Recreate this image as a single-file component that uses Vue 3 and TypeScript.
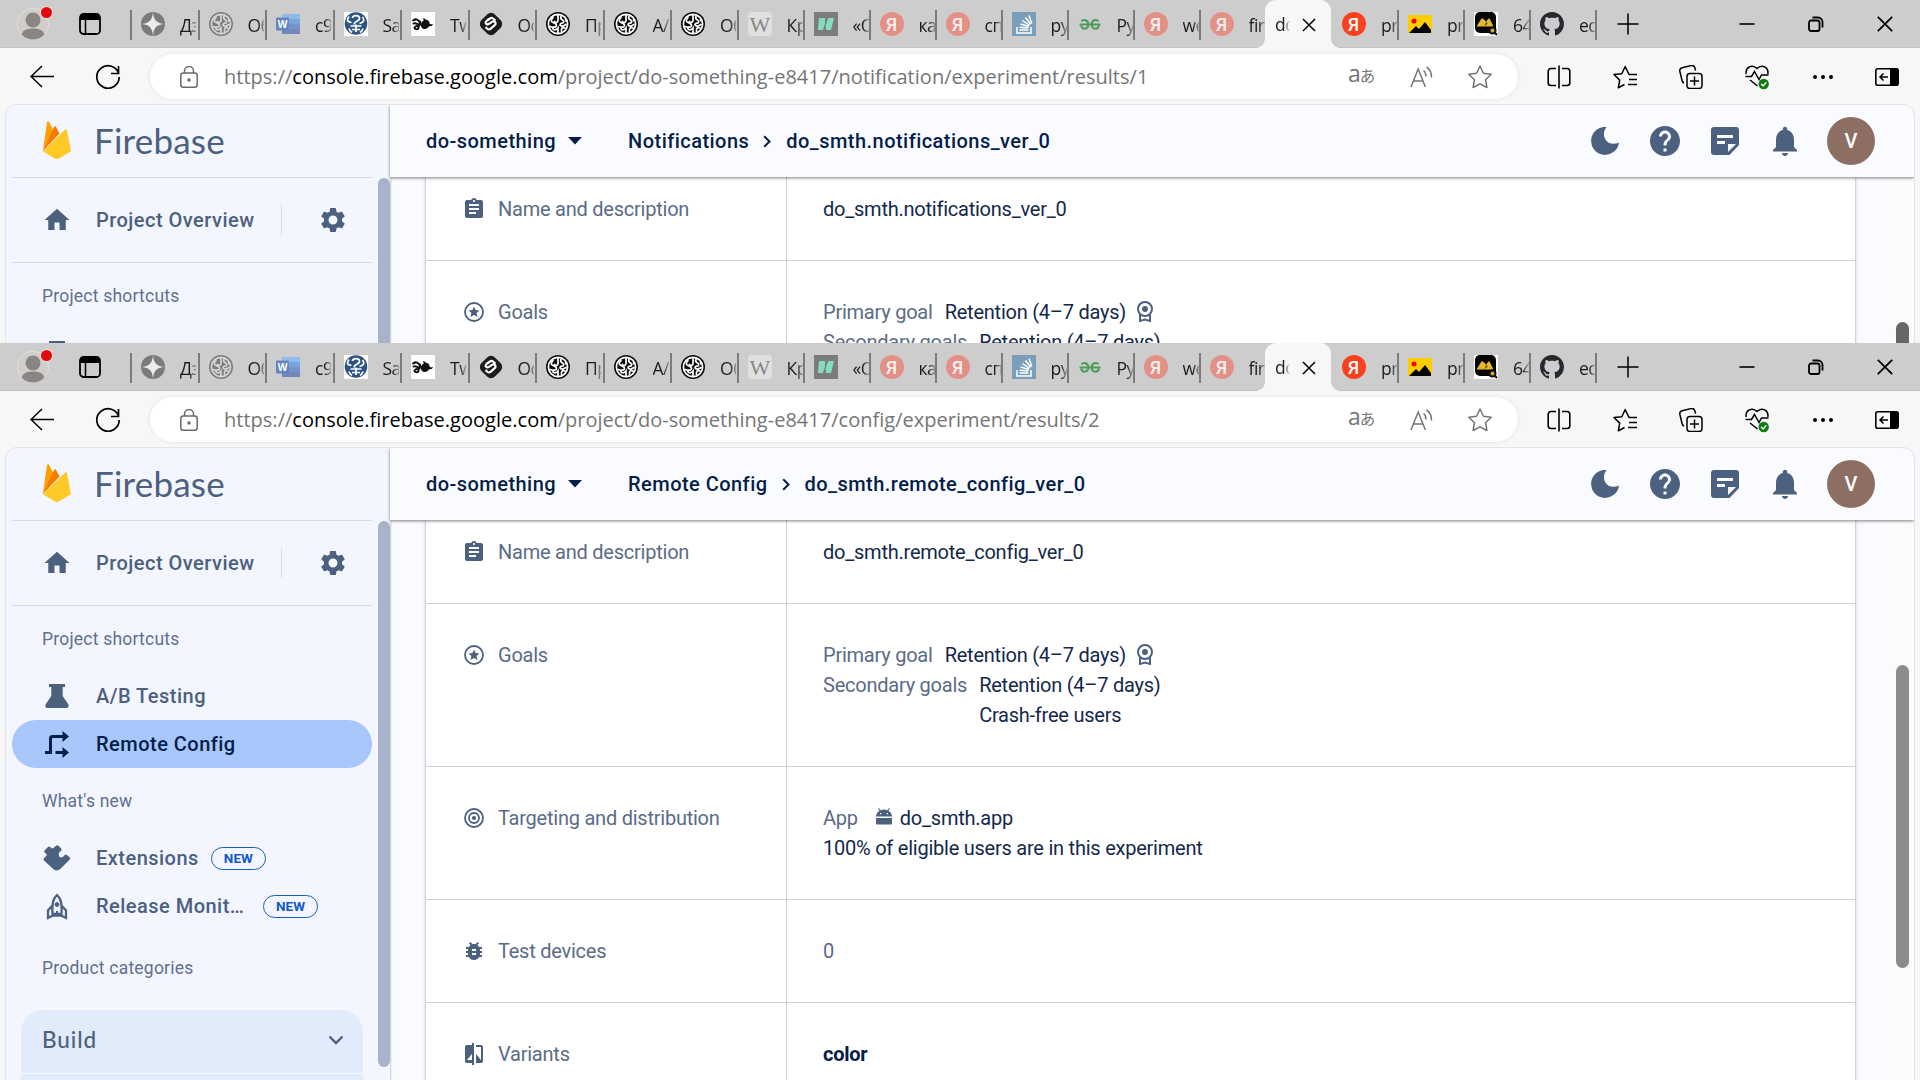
<script setup lang="ts">
interface Tab {
  icon?: string
  label: string
  width: number
  active?: boolean
  noSeparator?: boolean
}

interface BrowserWindow {
  id: string
  path: string
  section: string
  title: string
  thumbTop: number
  thumbHeight: number
  thumbColor: string
}

const tabs: Tab[] = [
  { icon: 'f-spark', label: 'Дз', width: 67.5 },
  { icon: 'f-knot-gray', label: 'Об', width: 67.5 },
  { icon: 'f-word', label: 'c9', width: 67.5 },
  { icon: 'f-sa', label: 'Sa', width: 67.5 },
  { icon: 'f-leaf', label: 'Tw', width: 67.5 },
  { icon: 'f-s', label: 'Ос', width: 67.5 },
  { icon: 'f-knot', label: 'Пр', width: 67.5 },
  { icon: 'f-knot', label: 'А/', width: 67.5 },
  { icon: 'f-knot', label: 'Об', width: 66.5 },
  { icon: 'f-wiki', label: 'Кр', width: 66 },
  { icon: 'f-quote', label: '«О', width: 66 },
  { icon: 'f-ya-dim', label: 'ка', width: 66 },
  { icon: 'f-ya-dim', label: 'сп', width: 66 },
  { icon: 'f-stack', label: 'py', width: 66 },
  { icon: 'f-geeks', label: 'Py', width: 66 },
  { icon: 'f-ya-dim', label: 'we', width: 66 },
  { icon: 'f-ya-dim', label: 'fir', width: 66 },
  { label: 'do', width: 66.5, active: true },
  { icon: 'f-ya', label: 'pr', width: 66, noSeparator: true },
  { icon: 'f-image', label: 'pr', width: 66 },
  { icon: 'f-gold', label: '64', width: 66 },
  { icon: 'f-github', label: 'ed', width: 66 },
]

const windows: BrowserWindow[] = [
  {
    id: 'first',
    path: '/project/do-something-e8417/notification/experiment/results/1',
    section: 'Notifications',
    title: 'do_smth.notifications_ver_0',
    thumbTop: 145,
    thumbHeight: 300,
    thumbColor: '#666666',
  },
  {
    id: 'second',
    path: '/project/do-something-e8417/config/experiment/results/2',
    section: 'Remote Config',
    title: 'do_smth.remote_config_ver_0',
    thumbTop: 145,
    thumbHeight: 303,
    thumbColor: '#8b8b8b',
  },
]
</script>

<template>
  <div class="screen">
    <svg class="defs" aria-hidden="true">
      <defs>
        <symbol id="knot-lines" viewBox="0 0 24 24">
          <g fill="none" stroke-width="1.7" stroke-linecap="round">
            <circle cx="12" cy="12" r="9.6" />
            <path d="M12 3v5.500c0 2-2.500 2.500-3.500 1M7 5.500C4.500 8 5 10 7 10.500c2.500.8 3.500 1 3.500 3 0 1.500-2 2-3.500 1.500M4 14.500c1.500 0 3 .5 3.500 3 1.500.5 3.500 0 4.500-1.500v5.500M15 4.500c-1 2 .5 3 1.500 3.500 2 1 1.500 3-.5 3.200-2 .3-2.500 1.300-1.500 2.300 1.500 1 3.500.5 5.500-1M19.500 7.500 20 9M19 16c-1.500-.5-3-.3-3.500 1v2.500" />
          </g>
        </symbol>
        <symbol id="f-knot" viewBox="0 0 24 24"><circle cx="12" cy="12" r="12" fill="#0c0c0c" /><use href="#knot-lines" stroke="#fff" /></symbol>
        <symbol id="f-knot-gray" viewBox="0 0 24 24"><circle cx="12" cy="12" r="12" fill="#7b7b7b" /><use href="#knot-lines" stroke="#d6d6d6" /></symbol>
        <symbol id="f-spark" viewBox="0 0 24 24"><circle cx="12" cy="12" r="12" fill="#7b7b7b" /><path d="M12 0c.6 8 3.500 11.400 12 12-8.500.6-11.400 3.500-12 12-.6-8.500-3.500-11.400-12-12 8.500-.6 11.400-4 12-12z" fill="#ececec" /></symbol>
        <symbol id="f-word" viewBox="0 0 24 24"><path d="M6 2h18v5H6z" fill="#8fbbe8" /><path d="M6 7h18v5H6z" fill="#7ba4da" /><path d="M6 12h18v5H6z" fill="#7594cc" /><path d="M6 17h18v5H6z" fill="#7387ba" /><rect y="5.500" width="13" height="13" rx="1" fill="#6585bd" /><text x="6.500" y="15.600" font-family="Open Sans, sans-serif" font-weight="700" font-size="10" text-anchor="middle" fill="#fff">W</text></symbol>
        <symbol id="f-sa" viewBox="0 0 24 24"><path d="M0 0h24v24H0z" fill="#fff" /><circle cx="12" cy="11.500" r="11.300" fill="#2c5484" /><g fill="none" stroke="#fff" stroke-width="1.700"><path d="M8.500 6c0-3 6.500-3.500 7 0 .3 3.500-5.500 3-5.500 6.500M5 4.500C2.500 8 3 10 7.500 10.500M18.500 5c2.500 3 1.500 5-3 6.500M6.500 14h11M8 17.500h8M5 16.500c.5 2 1.500 3 3 4M19 16.500c-.5 2-1.500 3-3 4M12 12.500v7.500" /></g></symbol>
        <symbol id="f-leaf" viewBox="0 0 24 24"><path d="M0 0h24v24H0z" fill="#fff" /><path d="M12.300 6.200c1.200 0 2 .7 2.600 1.500 2.300 0 4 2 3.800 4.300 1.300.2 2.300.5 3.500 0-.7 2-2.400 2.500-4.200 2.200-1.300 2.800-5.300 4-7.300 1.300-2-3-.2-6 2.500-7.500-.8-.3-1.500-1-.9-1.800z" fill="#111" /><path d="M2 8.500c3-2.200 5.500-1 7 2.300M2.500 11.500c2.500-1.500 4 1.500 6.500 1M3.500 16c1-3 4.500-2 4 0s-3.500 1.500-4-.2M9 9.500c.5 2 .3 3.500-1.500 5" fill="none" stroke="#111" stroke-width="2" stroke-linecap="round" /></symbol>
        <symbol id="f-s" viewBox="0 0 24 24"><rect x="2.500" y="2.500" width="19" height="19" rx="5.500" transform="rotate(45 12 12)" fill="#1c1c1e" /><path d="m16.500 8.500-2.500-2c-1-.8-2-.8-3 0L7.500 9c-1.500 1.200-1 3 .8 3.300 1 .2 1.700-.3 2.500-.9l2.500-1.700c1.600-1 3.700.2 3.200 2.300-.2.800-.7 1.200-1.400 1.700L11.500 16.800c-1 .7-2 .7-3 0L6.500 15.200" stroke="#fff" stroke-width="2.200" fill="none" /></symbol>
        <symbol id="f-wiki" viewBox="0 0 24 24"><rect width="24" height="24" rx="4" fill="#e0e0e0" /><text x="12" y="19.500" font-family="Liberation Serif, serif" font-size="22" text-anchor="middle" fill="#888">W</text></symbol>
        <symbol id="f-quote" viewBox="0 0 24 24"><path d="M0 0h24v24H0z" fill="#7c7c7c" /><path d="M5 6h6v7l3-7h6l-3 12h-5v-4.500L9.500 18H4z" fill="#86dcc0" /><path d="m13.500 6-4 12" stroke="#7c7c7c" stroke-width="1.200" /></symbol>
        <symbol id="f-ya-dim" viewBox="0 0 24 24"><circle cx="12" cy="12" r="12" fill="#e39186" /><text x="11.500" y="18.500" font-family="Roboto, sans-serif" font-weight="500" font-size="18" text-anchor="middle" fill="#f5f0ef">Я</text></symbol>
        <symbol id="f-ya" viewBox="0 0 24 24"><circle cx="12" cy="12" r="12" fill="#fc3f1d" /><text x="11.500" y="18.500" font-family="Roboto, sans-serif" font-weight="500" font-size="18" text-anchor="middle" fill="#fff">Я</text></symbol>
        <symbol id="f-stack" viewBox="0 0 24 24"><path d="M0 0h24v24H0z" fill="#7a9dba" /><g stroke="#fff" stroke-width="1.500" fill="none"><path d="M5 15v6h14v-6" /><path d="M7.500 18h9M7.600 15.300l8.800.8M8.500 12l8.300 2.500M10.500 8.500l7 4.800M13.500 5.500l5.200 6.800M17 3.500l2.800 8" /></g></symbol>
        <symbol id="f-geeks" viewBox="0 0 24 24"><g stroke="#4b9b5c" stroke-width="2" fill="none"><path d="M1.500 12.500h21" /><path d="M3.500 9.300C5.500 6.800 10.300 8 10.300 12.500S4.500 18.500 3 13.500M20.500 9.300C18.500 6.800 13.700 8 13.700 12.500s5.800 6 7.300 1" /></g></symbol>
        <symbol id="f-image" viewBox="0 0 24 24"><path d="M0 3h24v18H0z" fill="#fc0" /><path d="m1 21 7-7 3 3 6-7 6 8v3z" fill="#000" /><circle cx="6" cy="9" r="2.500" fill="#f00000" /></symbol>
        <symbol id="f-gold" viewBox="0 0 24 24"><path d="M0 0h24v24H0z" fill="#fff" /><rect x="1" y="0" width="21" height="21" rx="5" fill="#050505" /><path d="m2.500 14.500 5-8h1.500l3 3 2.500-3h1l4 8z" fill="#e5b92e" /><path d="m10.500 14 2-5 1 3z" fill="#6e4d08" /><circle cx="18.500" cy="18.500" r="3" stroke="#111" stroke-width="2" fill="#cda944" /><path d="m20.500 20.500 2.500 2.500" stroke="#111" stroke-width="2" /></symbol>
        <symbol id="f-github" viewBox="0 0 16 16"><path fill="#24292f" d="M8 0C3.580 0 0 3.580 0 8c0 3.540 2.290 6.530 5.470 7.590.4.070.55-.17.55-.38 0-.19-.01-.82-.01-1.490-2.010.37-2.530-.49-2.690-.94-.09-.23-.48-.94-.82-1.130-.28-.15-.68-.52-.01-.53.63-.01 1.080.58 1.230.82.72 1.210 1.870.87 2.330.66.07-.52.28-.87.51-1.070-1.780-.2-3.640-.89-3.640-3.950 0-.87.31-1.590.82-2.150-.08-.2-.36-1.020.08-2.120 0 0 .67-.21 2.200.82.64-.18 1.320-.27 2-.27s1.360.09 2 .27c1.530-1.040 2.200-.82 2.200-.82.44 1.100.16 1.920.08 2.120.51.56.82 1.270.82 2.150 0 3.070-1.870 3.750-3.650 3.950.29.25.54.73.54 1.480 0 1.070-.01 1.930-.01 2.200 0 .21.15.46.55.38A8.010 8.010 0 0 0 16 8c0-4.420-3.580-8-8-8z" /></symbol>
      </defs>
    </svg>

    <section v-for="win in windows" :key="win.id" class="window" :class="win.id">
      <div class="tabbar">
        <div class="profile">
          <svg width="32" height="32" viewBox="0 0 32 32"><circle cx="16" cy="16" r="15.700" fill="#d0cecb" stroke="#e2dfda" /><circle cx="16" cy="12" r="7.500" fill="#8a8582" /><path d="M4.500 26.500c2-5.500 7-6 11.500-6s9.500.5 11.500 6a15.500 15.500 0 0 1-23 0z" fill="#8a8582" /></svg>
          <i class="dot"></i>
        </div>
        <svg class="panes" width="22" height="22" viewBox="0 0 22 22"><rect x="1" y="1" width="20" height="20" rx="3.500" fill="none" stroke="#000" stroke-width="1.800" /><path d="M1 7V4a3 3 0 0 1 3-3h14a3 3 0 0 1 3 3v3z" /><path d="M6.500 7v14" stroke="#000" stroke-width="1.500" /></svg>
        <div v-for="(tab, i) in tabs" :key="i" class="tab" :class="{ active: tab.active, plain: tab.noSeparator }" :style="{ width: tab.width + 'px' }">
          <svg v-if="tab.icon" class="favicon"><use :href="'#' + tab.icon" /></svg>
          <span class="tab-label">{{ tab.label }}</span>
          <svg v-if="tab.active" class="tab-close" width="14" height="14" viewBox="0 0 14 14"><path d="M1 1l12 12M13 1 1 13" stroke="#000" stroke-width="1.500" /></svg>
        </div>
        <div class="new-tab"><svg width="22" height="22" viewBox="0 0 22 22"><path d="M11 .5v21M.5 11h21" stroke="#000" stroke-width="1.500" /></svg></div>
        <div class="controls">
          <svg width="16" height="16" viewBox="0 0 16 16"><path d="M.5 8h15" stroke="#000" stroke-width="1.600" /></svg>
          <svg width="16" height="16" viewBox="0 0 16 16" fill="none" stroke="#000" stroke-width="1.800"><rect x="1" y="4.500" width="10.500" height="10.500" rx="2" /><path d="M4.500 1.500H10a4.500 4.500 0 0 1 4.500 4.500v5.500" /></svg>
          <svg width="16" height="16" viewBox="0 0 16 16"><path d="M.8.8l14.400 14.400M15.200.8.8 15.200" stroke="#000" stroke-width="1.800" /></svg>
        </div>
      </div>

      <div class="toolbar">
        <svg class="back" width="24" height="24" viewBox="0 0 24 24" fill="none" stroke="#000" stroke-width="1.500"><path d="M24 11.500H1M12 1 1 11.500 12 22" /></svg>
        <svg class="reload" width="26" height="26" viewBox="0 0 26 26" fill="none" stroke="#000" stroke-width="1.700"><path d="M23.800 10A11.200 11.200 0 1 0 24.200 13M23.500 2v7.500H16" /></svg>
        <div class="omnibox">
          <svg class="lock" width="18" height="22" viewBox="0 0 18 22" fill="none" stroke="#6a6a6a" stroke-width="1.500"><rect x=".8" y="7" width="16.400" height="14.200" rx="2.500" /><path d="M4.500 7V5a4.500 4.500 0 0 1 9 0v2" /><circle cx="9" cy="14" r="1" fill="#6a6a6a" /></svg>
          <span class="url"><span>https://</span><b>console.firebase.google.com</b><span>{{ win.path }}</span></span>
          <span class="translate">a<small>あ</small></span>
          <svg class="read" width="24" height="22" viewBox="0 0 24 22" fill="none" stroke="#757575" stroke-width="1.500"><path d="M1 21 8.200 3 15.400 21M3.500 15h9.500M13.500 4.500c2 1.500 2.500 3.500 2.500 6M16.500 1c3.500 2.200 5 5.500 5 10.500" /></svg>
          <svg class="star" width="26" height="26" viewBox="0 0 26 26" fill="none" stroke="#757575" stroke-width="1.500" stroke-linejoin="round"><path d="m13 2 3.400 7.200 7.800 1-5.700 5.500 1.400 7.800-6.900-3.700-6.900 3.700 1.400-7.800L1.800 10.200l7.800-1z" /></svg>
        </div>
        <div class="tools">
          <svg width="24" height="24" viewBox="0 0 24 24" fill="none" stroke="#000" stroke-width="1.600"><path d="M12 .5v23M9 3.500H4A2.800 2.800 0 0 0 1.200 6.300v11.400A2.800 2.800 0 0 0 4 20.500h5M15 3.500h5a2.800 2.800 0 0 1 2.800 2.800v11.400a2.800 2.800 0 0 1-2.800 2.800h-5" /></svg>
          <svg width="24" height="24" viewBox="0 0 24 24" fill="none" stroke="#000" stroke-width="1.500" stroke-linejoin="round"><path d="M24 9.500h-8L12.200 1.500 8.800 8.700 1 9.500l5.700 5.600-1.400 7.700 6.200-3.300M16 14.500h8M15 19.500h9" /></svg>
          <svg width="24" height="24" viewBox="0 0 24 24" fill="none" stroke="#000" stroke-width="1.500"><rect x="8" y="8.500" width="15" height="15" rx="3" /><path d="M15.500 11.500v9M11 16h9M5 18c-1-.5-1.600-1.200-1.900-2.300L.9 6.500C.5 4.500 1.500 3.200 3.200 2.800l8.800-2.200c2-.4 3.300.4 3.800 2l.8 3" /></svg>
          <svg width="24" height="26" viewBox="0 0 24 26" fill="none" stroke="#000" stroke-width="1.500"><path d="M1.200 10C0 3.500 7-.5 12 4.500 17-.5 24 3.500 22.800 10M.5 12.500h6l3-5 4.500 8 2.500-4.500h7M5 16l7.500 6" /><circle cx="18.700" cy="20" r="5.200" fill="#107c10" stroke="none" /><path d="m16.200 20 1.900 1.900 3.200-3.500" stroke="#fff" stroke-width="1.400" /></svg>
          <svg width="24" height="24" viewBox="0 0 24 24"><circle cx="4" cy="12" r="2" /><circle cx="12" cy="12" r="2" /><circle cx="20" cy="12" r="2" /></svg>
          <svg class="side-toggle" width="24" height="24" viewBox="0 0 24 24"><rect x=".8" y="3.800" width="22.400" height="16.400" rx="2" fill="none" stroke="#000" stroke-width="1.600" /><path d="M15 3.500h8v17h-8z" /><path d="M13 12H5M8.500 8.500 5 12l3.500 3.500" stroke="#000" stroke-width="1.500" fill="none" /></svg>
        </div>
      </div>

      <div class="page">
        <aside class="sidebar">
          <div class="brand">
            <svg width="30" height="41" viewBox="0 0 30 41"><path d="M.8 31.500 5 2.200C5.200 1 6.500.8 7 1.800l4.600 8.700z" fill="#ffa000" /><path d="M17.500 13.500 14 6.800c-.4-.8-1.400-.8-1.800 0L1 31z" fill="#f57c00" /><path d="m1 31.300 22-21.600c.8-.7 1.900-.3 2.100.7L29 31.200l-12.200 7.300c-1.300.8-2.600.8-3.900 0z" fill="#ffca28" /></svg>
            <span>Firebase</span>
          </div>
          <div class="side-body">
            <nav class="nav">
              <div class="overview">
                <svg class="nav-icon" viewBox="0 0 24 24"><path d="M10 20v-6h4v6h5v-8h3L12 3 2 12h3v8z" /></svg>
                <span>Project Overview</span>
                <i class="bar"></i>
                <svg class="gear" viewBox="0 0 24 24"><path d="M19.140 12.940c.04-.3.060-.61.060-.94 0-.32-.02-.64-.07-.94l2.030-1.580c.18-.14.23-.41.12-.61l-1.920-3.320c-.12-.22-.37-.29-.59-.22l-2.390.96c-.5-.38-1.030-.7-1.620-.94l-.36-2.540c-.04-.24-.24-.41-.48-.41h-3.840c-.24 0-.43.17-.47.41l-.36 2.540c-.59.24-1.130.57-1.620.94l-2.390-.96c-.22-.08-.47 0-.59.22L2.740 8.870c-.12.21-.08.47.12.61l2.030 1.580c-.05.3-.09.63-.09.94s.02.64.07.94l-2.030 1.580c-.18.14-.23.41-.12.61l1.920 3.320c.12.22.37.29.59.22l2.390-.96c.5.38 1.030.7 1.620.94l.36 2.540c.05.24.24.41.48.41h3.840c.24 0 .44-.17.47-.41l.36-2.540c.59-.24 1.130-.56 1.620-.94l2.390.96c.22.08.47 0 .59-.22l1.920-3.320c.12-.22.070-.47-.12-.61l-2.010-1.580zM12 15.600c-1.980 0-3.600-1.620-3.600-3.600s1.620-3.600 3.600-3.600 3.600 1.620 3.600 3.600-1.620 3.600-3.600 3.600z" /></svg>
              </div>
              <p class="caption shortcuts">Project shortcuts</p>
              <div class="item">
                <svg class="nav-icon" viewBox="0 0 30 30"><path d="M7 3h16v3h-2.300v9l5.400 8c1.200 2 .4 4-1.900 4H5.800c-2.300 0-3.100-2-1.900-4l5.400-8V6H7z" /></svg>
                <span>A/B Testing</span>
              </div>
              <div class="item selected">
                <svg class="nav-icon" viewBox="0 0 30 30"><path d="M3 23.500h5.500V9.500q0-2 2-2H21M13.500 23.500H21" fill="none" stroke="currentColor" stroke-width="3" /><path d="M20.500 2 27 7.500l-6.500 5.500zM20.500 18l6.500 5.500-6.500 5.500z" /></svg>
                <span>Remote Config</span>
              </div>
              <p class="caption new">What's new</p>
              <div class="item">
                <svg class="nav-icon" viewBox="0 0 30 30"><path d="M2.500 7.500 6 4q1.200-1 2.300 0 2.200 2.600 4 .3l1.700-1.600q1.300-1 2.500.1L19.200 5.500q1 1.200-.1 2.300-3 2.200-2.300 4.500.5 2.500 2.700 2.200 1.500-.5 3.200-2.600 1.200-1 2.300 0l2.800 2.700q.9 1.100-.1 2L18.200 26q-3.200 2.700-6.400.4L2 17.500q-1-1.200-.1-2.300 3.200-2.300 2.700-3.700Q4.300 10.500 2.500 9.300q-.8-.9 0-1.800z" /></svg>
                <span>Extensions</span><em class="badge">NEW</em>
              </div>
              <div class="item">
                <svg class="nav-icon" viewBox="0 0 30 30" fill="none" stroke="currentColor" stroke-width="2.300"><path d="M15 4c-4 3.500-5 8-4.500 19h9C20 12 19 7.500 15 4zM10 15l-4 4.500V27l5-2.500h8L24 27v-7.500L20 15" /><circle cx="15" cy="13.500" r="2" fill="currentColor" stroke-width="1" /><path d="M15 20v4" stroke-width="2" /></svg>
                <span class="clip">Release Monit…</span><em class="badge">NEW</em>
              </div>
              <p class="caption categories">Product categories</p>
              <div class="build">
                <div class="build-head"><span>Build</span><svg width="16" height="10" viewBox="0 0 16 10"><path d="m1.500 1.500 6.500 6.500 6.500-6.500" fill="none" stroke="#4c6080" stroke-width="2.400" /></svg></div>
              </div>
            </nav>
            <div class="side-thumb"></div>
          </div>
        </aside>

        <div class="main">
          <header class="header">
            <span class="project">do-something</span>
            <svg class="caret" width="14" height="8" viewBox="0 0 14 8"><path d="M0 0h14L7 7.500z" /></svg>
            <span>{{ win.section }}</span>
            <svg class="chevron" width="9" height="13" viewBox="0 0 9 13"><path d="m1.200 1.200 5.300 5.300-5.300 5.300" fill="none" stroke="#051e49" stroke-width="2" /></svg>
            <span>{{ win.title }}</span>
            <div class="actions">
              <svg width="28" height="28" viewBox="0 0 28 28"><path d="M15.500 0A14 14 0 1 0 28 15.500C23.500 18 17.500 17 14.800 13 12 9 12.500 4 15.500 0z" /></svg>
              <svg width="36" height="36" viewBox="0 0 24 24"><path d="M12 2C6.480 2 2 6.480 2 12s4.480 10 10 10 10-4.480 10-10S17.520 2 12 2zm1 17h-2v-2h2v2zm2.070-7.750-.9.920C13.450 12.900 13 13.500 13 15h-2v-.5c0-1.100.45-2.100 1.170-2.830l1.240-1.260c.37-.36.59-.86.59-1.410 0-1.100-.9-2-2-2s-2 .9-2 2H8c0-2.210 1.790-4 4-4s4 1.790 4 4c0 .88-.36 1.680-.93 2.250z" /></svg>
              <svg width="28" height="28" viewBox="0 0 28 28"><path fill-rule="evenodd" d="M3 0h22a3 3 0 0 1 3 3v15L18.500 28H3a3 3 0 0 1-3-3V3a3 3 0 0 1 3-3zm3 8v3h16V8zm0 6v3h8v-3zm11 11 8-8h-8z" /></svg>
              <svg width="36" height="36" viewBox="0 0 24 24"><path d="M12 22c1.100 0 2-.9 2-2h-4c0 1.100.89 2 2 2zm6-6v-5c0-3.070-1.640-5.640-4.500-6.320V4c0-.83-.67-1.500-1.500-1.500s-1.500.67-1.500 1.500v.68C7.630 5.360 6 7.920 6 11v5l-2 2v1h16v-1l-2-2z" /></svg>
              <div class="avatar">V</div>
            </div>
          </header>
          <div class="scroll">
            <div class="card">
              <div class="row first-row">
                <div class="key"><svg viewBox="0 0 24 24"><path d="M19 3h-4.180C14.400 1.840 13.300 1 12 1c-1.300 0-2.400.84-2.820 2H5c-1.100 0-2 .9-2 2v14c0 1.100.9 2 2 2h14c1.100 0 2-.9 2-2V5c0-1.100-.9-2-2-2zm-7 0c.55 0 1 .45 1 1s-.45 1-1 1-1-.45-1-1 .45-1 1-1zm2 14H7v-2h7v2zm3-4H7v-2h10v2zm0-4H7V7h10v2z" /></svg>Name and description</div>
                <div class="value">{{ win.title }}</div>
              </div>
              <div class="row">
                <div class="key"><svg viewBox="0 0 24 24"><circle cx="12" cy="12" r="9" fill="none" stroke="currentColor" stroke-width="1.800" /><path d="m12 6.500 1.600 3.600 3.900.4-2.900 2.600.8 3.900-3.400-2-3.400 2 .8-3.900-2.900-2.600 3.900-.4z" /></svg>Goals</div>
                <div class="value">
                  <div class="line"><span class="muted">Primary goal</span>Retention (4–7 days)<svg class="award" width="16" height="22" viewBox="0 0 16 22" fill="none" stroke="currentColor" stroke-width="2"><circle cx="8" cy="8" r="7" /><circle cx="8" cy="8" r="2.200" fill="currentColor" stroke-width="1.500" /><path d="M3 13.500V20l5-1.500 5 1.500v-6.500" /></svg></div>
                  <div class="line"><span class="muted">Secondary goals</span><div>Retention (4–7 days)<br />Crash-free users</div></div>
                </div>
              </div>
              <div class="row">
                <div class="key"><svg viewBox="0 0 24 24" fill="none" stroke="currentColor" stroke-width="1.800"><circle cx="12" cy="12" r="9" /><circle cx="12" cy="12" r="5" /><circle cx="12" cy="12" r="1.200" fill="currentColor" /></svg>Targeting and distribution</div>
                <div class="value">
                  <div class="line"><span class="muted app">App</span><svg class="android" width="16" height="17" viewBox="0 0 16 17"><path fill-rule="evenodd" d="M0 8.500a8 7 0 0 1 3.700-5.800L2 .6l.8-.6 2 2.200a8 8 0 0 1 6.400 0l2-2.200.8.600-1.700 2.100A8 7 0 0 1 16 8.500zM4 5v1.300h1.300V5zm6.700 0v1.300H12V5zM0 10h16v5.500q0 1-1 1H1q-1 0-1-1z" /></svg>do_smth.app</div>
                  <div>100% of eligible users are in this experiment</div>
                </div>
              </div>
              <div class="row">
                <div class="key"><svg viewBox="0 0 24 24"><path d="M20 8h-2.810c-.45-.78-1.070-1.450-1.820-1.960L17 4.410 15.590 3l-2.170 2.170C12.960 5.060 12.490 5 12 5c-.49 0-.96.060-1.410.17L8.410 3 7 4.410l1.620 1.630C7.880 6.550 7.260 7.220 6.810 8H4v2h2.090c-.05.33-.09.66-.09 1v1H4v2h2v1c0 .34.04.67.09 1H4v2h2.810c1.040 1.790 2.970 3 5.190 3s4.150-1.210 5.190-3H20v-2h-2.090c.05-.33.09-.66.09-1v-1h2v-2h-2v-1c0-.34-.04-.67-.09-1H20V8zm-6 8h-4v-2h4v2zm0-4h-4v-2h4v2z" /></svg>Test devices</div>
                <div class="value soft">0</div>
              </div>
              <div class="row">
                <div class="key"><svg viewBox="0 0 24 24"><path d="M10 3H5c-1.100 0-2 .9-2 2v14c0 1.100.9 2 2 2h5v2h2V1h-2v2zm0 15H5l5-6v6zm9-15h-5v2h5v13l-5-6v9h5c1.100 0 2-.9 2-2V5c0-1.100-.9-2-2-2z" /></svg>Variants</div>
                <div class="value strong">color</div>
              </div>
            </div>
            <div class="track"><div class="thumb" :style="{ marginTop: win.thumbTop + 'px', height: win.thumbHeight + 'px', background: win.thumbColor }"></div></div>
          </div>
        </div>
      </div>
    </section>
  </div>
</template>

<style>
body { overflow: hidden; }
</style>

<style scoped>
.screen { width: 1920px; height: 1080px; overflow: hidden; font-family: Roboto, sans-serif; font-size: 20px; }
.screen *, .screen *::before, .screen *::after { box-sizing: border-box; }
.defs { position: absolute; width: 0; height: 0; }
svg { display: block; flex: none; }
.window { display: flex; flex-direction: column; overflow: hidden; background: #f7f7f7; }
.first { height: 343px; }
.second { height: 737px; }

.tabbar { flex: none; display: flex; align-items: center; height: 48px; background: #cdcdcd; border-bottom: 1px solid #c2c2c2; }
.profile { position: relative; width: 62px; padding-left: 17px; }
.dot { position: absolute; right: 10px; top: -1px; width: 11px; height: 11px; border-radius: 50%; background: #e00b0b; box-shadow: 0 0 0 1px #eadcdc; }
.panes { margin: 1px 29px 0 17px; }
.tab { flex: none; display: flex; align-items: center; height: 30px; margin-top: 3px; padding-left: 9px; border-left: 2px solid #7b7b7b; }
.favicon { width: 24px; height: 24px; margin: -2px 15px 0 0; }
.tab-label { width: 16px; overflow: hidden; white-space: nowrap; font: 17.5px/26px "Open Sans", sans-serif; color: #1b1b1b; margin-top: -1px; letter-spacing: -0.5px; mask-image: linear-gradient(90deg, #000 60%, rgba(0, 0, 0, 0.3)); }
.tab.plain { border-color: transparent; }
.tab.active { position: relative; align-self: stretch; height: 48px; margin: 0 0 -1px; padding: 0 0 0 10.5px; border: 0; background: #f7f7f7; border-radius: 11px 11px 0 0; }
.tab.active::before, .tab.active::after { content: ""; position: absolute; bottom: 0; width: 9px; height: 9px; }
.tab.active::before { left: -9px; background: radial-gradient(circle at 0 0, transparent 8.5px, #f7f7f7 9px); }
.tab.active::after { right: -9px; background: radial-gradient(circle at 100% 0, transparent 8.5px, #f7f7f7 9px); }
.tab.active .tab-label { margin-top: 0; width: 15px; mask-image: linear-gradient(90deg, #000 60%, transparent); }
.tab-close { margin: 2px 0 0 12px; }
.new-tab { flex: none; display: flex; align-items: center; height: 30px; margin-top: 3px; padding: 0 0 3px 20px; border-left: 2px solid #7b7b7b; }
.controls { display: flex; gap: 53px; margin-left: auto; padding-right: 27px; }

.toolbar { flex: none; display: flex; align-items: center; height: 56px; padding: 1px 0 0 30px; }
.reload { margin-left: 41px; }
.omnibox { display: flex; align-items: center; width: 1368px; height: 45px; margin-left: 29px; padding-left: 30px; border-radius: 23px; background: #fff; box-shadow: 0 0 4px rgba(0, 0, 0, 0.09); }
.url { width: 1124px; margin-left: 26px; font: 20px/30px "Open Sans", sans-serif; letter-spacing: 0.015px; color: #757575; white-space: nowrap; }
.url b { font-weight: 400; color: #000; }
.translate { display: flex; align-items: baseline; width: 62px; font: 23px/26px "Open Sans", sans-serif; color: #757575; margin-top: -7px; }
.translate small { font: 15.5px/20px "Noto Sans CJK JP", sans-serif; margin-left: -1px; }
.star { margin-left: 33px; }
.tools { display: flex; align-items: center; gap: 42px; margin-left: 29px; }
.side-toggle { margin-left: -2px; }

.page { flex: 1; min-height: 0; display: flex; width: 1910px; margin-left: 5px; border: 1px solid #e2e4e8; border-bottom: 0; border-radius: 12px 12px 0 0; overflow: hidden; background: #fafbff; }
.sidebar { flex: none; display: flex; flex-direction: column; width: 384px; background: #f3f6fe; color: #4c6080; box-shadow: 1px 0 2px rgba(0, 0, 0, 0.2); letter-spacing: 0.48px; }
.brand { flex: none; display: flex; align-items: center; height: 73px; width: 360px; margin-left: 6px; padding: 0 0 2px 30px; border-bottom: 1px solid #d5dbe7; }
.brand span { margin: 0 0 1px 22px; font: 35px/44px Lato, sans-serif; letter-spacing: 0.2px; }
.side-body { flex: 1; min-height: 0; display: flex; overflow: hidden; }
.nav { width: 372px; padding-left: 6px; font-weight: 500; }
.side-thumb { width: 12px; height: 546px; border-radius: 6px; background: #a7b3ca; }
.overview { display: flex; align-items: center; width: 360px; height: 85px; padding: 0 0 1px 30px; border-bottom: 1px solid #d5dbe7; }
.nav-icon { width: 30px; height: 30px; fill: currentColor; margin-right: 24px; }
.nav-icon[fill="none"] { fill: none; }
.overview span { width: 185px; white-space: nowrap; }
.bar { width: 1px; height: 30px; background: #d5dbe7; }
.gear { width: 30px; height: 30px; margin-left: 36px; fill: currentColor; }
.caption { margin: 0; padding-left: 30px; font-weight: 400; font-size: 17.5px; line-height: 24px; letter-spacing: 0.22px; color: #5f7090; }
.shortcuts { padding-top: 21px; padding-bottom: 21px; }
.new { padding-top: 21px; padding-bottom: 21px; }
.categories { padding-top: 26px; padding-bottom: 30px; }
.item { display: flex; align-items: center; width: 360px; height: 48px; padding-left: 30px; border-radius: 24px; }
.item.selected { background: #a8c7fa; color: #041e49; }
.clip { width: 155px; white-space: nowrap; }
.badge { width: 55px; height: 23px; margin-left: 12px; border: 1.3px solid #1a5bc0; border-radius: 12px; font: 700 13.5px/21px Roboto, sans-serif; letter-spacing: 0; text-align: center; color: #1558c9; }
.build { width: 342px; margin-left: 9px; height: 200px; border-radius: 22px 22px 0 0; background: #e2ebfa; }
.build-head { display: flex; align-items: center; justify-content: space-between; height: 64px; padding: 0 19px 4px 21px; border-bottom: 1px solid #f5f8fe; font: 500 22.5px/30px Lato, sans-serif; letter-spacing: 0.9px; }

.main { position: relative; flex: 1; min-width: 0; display: flex; flex-direction: column; }
.header { position: relative; flex: none; display: flex; align-items: center; height: 72px; padding: 0 39px 0 36px; background: #fafbff; box-shadow: 0 1px 3px rgba(0, 0, 0, 0.5); font-weight: 500; letter-spacing: 0.46px; color: #051e49; white-space: nowrap; }
.caret { margin: 0 46.5px 0 11.5px; fill: #051e49; }
.chevron { margin: 0 14px; }
.actions { display: flex; align-items: center; margin-left: auto; fill: #4c6080; }
.actions svg { margin-left: 28px; }
.avatar { width: 48px; height: 48px; margin-left: 24px; border-radius: 50%; background: #8d6e63; color: #fff; text-align: center; line-height: 48px; letter-spacing: 0; }
.scroll { flex: 1; min-height: 0; display: flex; justify-content: space-between; padding-left: 36px; }
.card { flex: none; width: 1429px; height: 700px; background: #fff; box-shadow: 0 0 3px rgba(0, 0, 0, 0.4); }
.row { display: flex; border-bottom: 1px solid #cfd0d4; line-height: 30px; letter-spacing: -0.235px; }
.key { display: flex; align-items: flex-start; width: 361px; padding: 36px 0 36px 36px; border-right: 1px solid #cfd0d4; color: #5a6b87; }
.first-row .key, .first-row .value { padding-top: 17px; }
.key svg { width: 24px; height: 24px; margin: 3px 12px 0 0; fill: currentColor; color: #4c6080; }
.key svg[fill="none"] { fill: none; }
.value { padding: 36px; color: #14284b; }
.line { display: flex; }
.muted { color: #5a6b87; margin-right: 12px; }
.app { margin-right: 18px; }
.award { margin: 4px 0 0 11px; color: #4c6080; }
.android { margin: 5px 8px 0 0; fill: #4c6080; }
.soft { color: #5a6b87; }
.strong { font-weight: 700; color: #041e49; }
.track { width: 24px; background: #fbfbfc; }
.thumb { width: 13px; margin-left: 6px; border-radius: 7px; }
</style>
